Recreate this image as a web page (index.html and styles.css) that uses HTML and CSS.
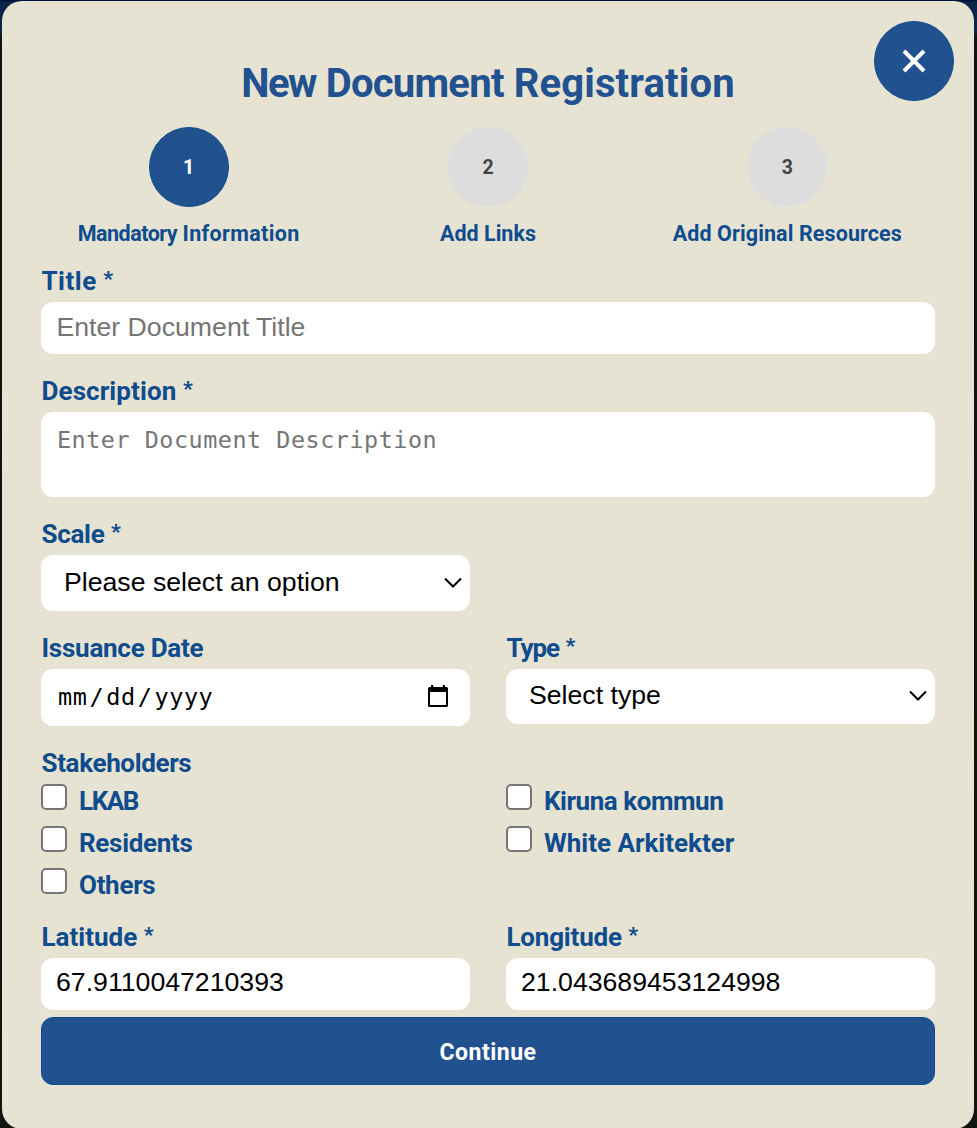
FILE: index.html
```html
<!DOCTYPE html>
<html lang="en">
<head>
<meta charset="utf-8">
<title>New Document Registration</title>
<link rel="stylesheet" href="styles.css">
</head>
<body>
<main class="modal">
  <button class="close" aria-label="Close"><svg width="24" height="24" viewBox="0 0 24 24"><path d="M2 2L22 22M22 2L2 22" stroke="#fff" stroke-width="4" fill="none"/></svg></button>
  <h1 class="heading"><span class="h-tight">New</span> <span class="h-mid">Document</span> <span class="h-wide">Registration</span></h1>
  <div class="steps">
    <div class="step"><div class="dot active">1</div><span class="step-name"><span class="s-tight">Mandatory</span> <span class="s-wide">Information</span></span></div>
    <div class="step"><div class="dot">2</div><span class="step-name">Add Links</span></div>
    <div class="step"><div class="dot">3</div><span class="step-name s3">Add Original Resources</span></div>
  </div>
  <form class="form">
    <div class="field">
      <label class="label"><span class="l-title">Title</span> <b class="star">*</b></label>
      <input class="control text" type="text" placeholder="Enter Document Title">
    </div>
    <div class="field">
      <label class="label"><span class="l-desc">Description</span> <b class="star">*</b></label>
      <textarea class="control area" placeholder="Enter Document Description"></textarea>
    </div>
    <div class="row">
      <div class="field">
        <label class="label"><span class="l-scale">Scale</span> <b class="star">*</b></label>
        <div class="control select scale"><span>Please select an option</span><svg width="18" height="12" viewBox="0 0 18 12"><path d="M1 1.500L9 9.500L17 1.500" stroke="#000" stroke-width="2" fill="none"/></svg></div>
      </div>
    </div>
    <div class="row">
      <div class="field">
        <label class="label"><span class="l-date">Issuance Date</span></label>
        <div class="control date"><span class="date-text"><span>mm</span><i>/</i><span>dd</span><i>/</i><span>yyyy</span></span><svg width="20" height="22" viewBox="0 0 20 22"><path d="M3 0h2.200v2h9.600V0H17v2h1.500Q20 2 20 3.500v17Q20 22 18.500 22h-17Q0 22 0 20.500v-17Q0 2 1.500 2H3zM2 7v13h16V7z" fill="#000" fill-rule="evenodd"/></svg></div>
      </div>
      <div class="field">
        <label class="label"><span class="l-type">Type</span> <b class="star">*</b></label>
        <div class="control select type"><span>Select type</span><svg width="18" height="12" viewBox="0 0 18 12"><path d="M1 1.500L9 9.500L17 1.500" stroke="#000" stroke-width="2" fill="none"/></svg></div>
      </div>
    </div>
    <div class="stakeholders">
      <div class="label"><span class="l-stake">Stakeholders</span></div>
      <div class="checks">
        <label class="check"><span class="box"></span><span class="c-lkab">LKAB</span></label>
        <label class="check"><span class="box"></span><span class="c-kiruna">Kiruna kommun</span></label>
        <label class="check"><span class="box"></span><span class="c-res">Residents</span></label>
        <label class="check"><span class="box"></span><span>White Arkitekter</span></label>
        <label class="check"><span class="box"></span><span class="c-res">Others</span></label>
      </div>
    </div>
    <div class="row last">
      <div class="field">
        <label class="label"><span>Latitude</span> <b class="star">*</b></label>
        <input class="control number" type="text" value="67.9110047210393">
      </div>
      <div class="field">
        <label class="label"><span class="l-long">Longitude</span> <b class="star">*</b></label>
        <input class="control number" type="text" value="21.043689453124998">
      </div>
    </div>
    <button class="continue" type="button"><span>Continue</span></button>
  </form>
</main>
</body>
</html>
```
FILE: styles.css
```css
* { box-sizing: border-box; }
body {
  margin: 0;
  height: 1128px;
  overflow: hidden;
  padding: 1px 3px 0 2px;
  background: linear-gradient(#04103f 0, #04103f 1px, #0d2645 2px, #0b2447 33px, #0d1614 34px, #10150f 100%);
  font-family: Roboto, "Liberation Sans", sans-serif;
  font-weight: 700;
  color: #0f4c8d;
}
.modal {
  position: relative;
  height: 1128px;
  padding: 57px 39px 0;
  border-radius: 20px;
  background: #e6e3d3;
}
.close {
  position: absolute;
  top: 20px;
  right: 20px;
  width: 80px;
  height: 80px;
  display: grid;
  place-items: center;
  padding: 0;
  border: 1px solid #0f4c8d;
  border-radius: 50%;
  background: #21518e;
}
.heading {
  margin: 0;
  height: 50px;
  line-height: 52px;
  font-size: 40px;
  text-align: center;
  color: #21518e;
  white-space: nowrap;
}
.h-tight { letter-spacing: -1.6px; }
.h-mid { letter-spacing: -0.75px; }
.h-wide { letter-spacing: 0.15px; }
.steps {
  display: grid;
  grid-template-columns: repeat(3, 1fr);
  margin: 19px -2px 0;
}
.step { display: flex; flex-direction: column; align-items: center; }
.dot {
  width: 80px;
  height: 80px;
  border-radius: 50%;
  background: #ddd;
  color: #444;
  font-size: 19.5px;
  line-height: 82px;
  text-align: center;
}
.dot.active { background: #21518e; border: 1px solid #0f4c8d; line-height: 80px; color: #fff; }
.step-name { margin-top: 10px; font-size: 21.5px; line-height: 34px; white-space: nowrap; }
.s-tight { letter-spacing: -0.5px; }
.s-wide { letter-spacing: 0.35px; }
.s3 { letter-spacing: 0.1px; }
.form { display: flex; flex-direction: column; gap: 20px; margin-top: 13px; }
.row { display: grid; grid-template-columns: 1fr 1fr; gap: 36px; align-items: start; }
.field { display: flex; flex-direction: column; }
.label { display: block; height: 38px; padding-left: 0.5px; font-size: 26px; line-height: 34px; white-space: nowrap; }
.star { font-size: 21px; font-weight: 900; line-height: 1; vertical-align: 4px; }
.l-title { letter-spacing: 0.5px; }
.l-desc { letter-spacing: 0.1px; }
.l-scale { letter-spacing: -0.3px; }
.l-date { letter-spacing: -0.25px; }
.l-type { letter-spacing: -1.1px; }
.l-stake { letter-spacing: -0.35px; }
.l-long { letter-spacing: -0.2px; }
.control {
  width: 100%;
  height: 52px;
  margin: 0;
  padding: 0 16px;
  border: 0;
  border-radius: 12px;
  background: #fff;
  color: #000;
  font-family: "Liberation Sans", Arial, sans-serif;
  font-weight: 400;
  font-size: 26.67px;
}
.control::placeholder { color: #757575; opacity: 1; }
.text { padding: 0 15.5px 2px; }
.number { padding: 0 15px 3px; }
.area {
  display: block;
  height: 85px;
  padding: 13px 16px;
  font-family: "DejaVu Sans Mono", monospace;
  font-size: 23.4px;
  letter-spacing: 0.54px;
  line-height: 30px;
  resize: none;
}
.select { display: flex; align-items: center; justify-content: space-between; padding: 0 8px 0 23px; }
.select span { padding-bottom: 2px; }
.scale { height: 56px; }
.type { height: 55px; padding-bottom: 1px; }
.date { display: flex; align-items: center; justify-content: space-between; height: 57px; padding: 0 22px 2px 17px; }
.date svg { margin-bottom: 2px; }
.date-text { display: flex; font-family: "DejaVu Sans Mono", monospace; font-size: 23.5px; letter-spacing: 0.5px; }
.date-text i { font-style: normal; width: 19px; text-align: center; }
.checks { display: grid; grid-template-columns: 1fr 1fr; column-gap: 36px; grid-auto-rows: 42px; }
.check { display: flex; align-items: flex-start; gap: 12px; height: 42px; font-size: 26px; line-height: 34px; }
.c-lkab { letter-spacing: -1.4px; }
.c-kiruna { letter-spacing: -0.45px; }
.c-res { letter-spacing: -0.3px; }
.box { width: 26px; height: 26px; border: 2px solid #767676; border-radius: 5px; background: #fff; }
.last { margin-top: -10px; }
.continue {
  height: 68px;
  margin-top: -13px;
  padding: 2px 0 0;
  border: 1px solid #0f4c8d;
  border-radius: 12px;
  background: #21518e;
  color: #fff;
  font: 700 23px Roboto, sans-serif;
  letter-spacing: 0.5px;
}
```
